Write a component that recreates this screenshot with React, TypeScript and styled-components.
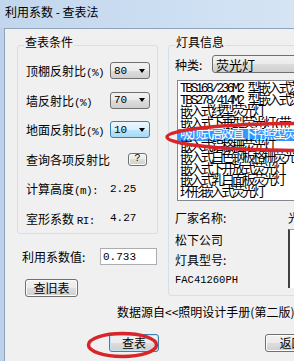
import React from 'react';
import styled, { createGlobalStyle } from 'styled-components';

const CJK = `"Noto Sans CJK SC", "Noto Sans", sans-serif`;
const MONO = `"Liberation Mono", "Noto Sans CJK SC", monospace`;

const GlobalStyle = createGlobalStyle`
  html, body {
    margin: 0;
    padding: 0;
  }
  body {
    width: 294px;
    height: 361px;
    overflow: hidden;
    background: #f0f0f0;
    font-family: ${CJK};
    font-size: 12px;
    color: #000;
  }
`;

const Window = styled.div`
  width: 340px;
  height: 361px;
  display: flex;
  flex-direction: column;
  background: #bdd2ea;
`;

const TitleBar = styled.div`
  height: 28px;
  flex: none;
  padding-left: 5px;
  line-height: 24px;
  font-size: 12px;
  background: linear-gradient(90deg, #c2d6ed 0%, #cddff2 55%, #dae7f5 100%);
`;

const Frame = styled.div`
  flex: 1;
  display: flex;
  padding-left: 4px;
`;

const Client = styled.div`
  flex: 1;
  position: relative;
  background: #f0f0f0;
  border-top: 1px solid #8fa4bb;
  border-left: 1px solid #8fa4bb;
  padding: 16px 0 0 12px;
`;

const MainRow = styled.div`
  display: flex;
  gap: 10px;
`;

const LeftColumn = styled.div`
  width: 141px;
  flex: none;
  display: flex;
  flex-direction: column;
`;

const GroupBox = styled.div<{ $height: number }>`
  position: relative;
  box-sizing: border-box;
  height: ${p => p.$height}px;
  border: 1px solid #d5dfe5;
  border-radius: 3px;
`;

const Legend = styled.span`
  position: absolute;
  top: -11px;
  left: 6px;
  padding: 0 1px;
  line-height: 14px;
  background: #f0f0f0;
`;

const ConditionList = styled.div`
  padding: 10px 0 0 8px;
`;

const Row = styled.div`
  height: 29.5px;
  display: grid;
  grid-template-columns: 84px auto;
  align-items: center;
  justify-items: start;
`;

const Latin = styled.span`
  font-family: ${MONO};
  font-size: 11px;
  letter-spacing: -0.6px;
`;

const Combo = styled.div<{ $focus?: boolean; $width?: string; $height?: number }>`
  box-sizing: border-box;
  width: ${p => p.$width || '40px'};
  height: ${p => p.$height || 17}px;
  display: flex;
  align-items: center;
  padding-left: 3px;
  border: 1px solid ${p => (p.$focus ? '#3c7fb1' : '#707070')};
  border-radius: 3px;
  background: ${p =>
    p.$focus
      ? 'linear-gradient(180deg, #eaf6fd 0%, #d9f0fc 50%, #bee6fd 50%, #a7d9f5 100%)'
      : 'linear-gradient(180deg, #f2f2f2 0%, #ebebeb 50%, #dddddd 50%, #cfcfcf 100%)'};
`;

const ComboText = styled.span`
  font-family: ${MONO};
  font-size: 11px;
`;

const Arrow = styled.span`
  margin-left: auto;
  margin-right: 4px;
  width: 0;
  height: 0;
  border-left: 3.5px solid transparent;
  border-right: 3.5px solid transparent;
  border-top: 4px solid #000;
`;

const Button = styled.button<{ $width: number; $height?: number; $default?: boolean }>`
  box-sizing: border-box;
  width: ${p => p.$width}px;
  height: ${p => p.$height || 18}px;
  padding: 0;
  margin: 0;
  font-family: ${CJK};
  font-size: 12px;
  line-height: 14px;
  color: #000;
  border: 1px solid ${p => (p.$default ? '#3c7fb1' : '#707070')};
  border-radius: 3px;
  box-shadow: inset 0 0 0 1px ${p => (p.$default ? '#c4e5f6' : '#fcfcfc')};
  background: linear-gradient(180deg, #f2f2f2 0%, #ebebeb 50%, #dddddd 50%, #cfcfcf 100%);
`;

const HelpButton = styled(Button)`
  margin-left: 18px;
  font-family: ${MONO};
  font-size: 10px;
  line-height: 10px;
`;

const ValueRow = styled.div`
  margin-top: 14px;
  padding-left: 5px;
  height: 17px;
  display: flex;
  align-items: center;
`;

const ValueLabel = styled.span`
  width: 78px;
`;

const TextBox = styled.div`
  box-sizing: border-box;
  width: 57px;
  height: 17px;
  padding-left: 2px;
  display: flex;
  align-items: center;
  background: #fff;
  border: 1px solid #abadb3;
  font-family: ${MONO};
  font-size: 11px;
`;

const OldTableButton = styled(Button)`
  margin: 14px 0 0 8px;
`;

const RightGroup = styled(GroupBox)`
  flex: 1;
  padding-left: 6px;
`;

const KindRow = styled.div`
  margin-top: 9px;
  height: 18px;
  display: flex;
  align-items: center;
`;

const KindLabel = styled.span`
  width: 37px;
  flex: none;
`;

const KindText = styled.span`
  font-size: 13px;
`;

const ListBox = styled.div`
  margin: 7px 0 0 2px;
  box-sizing: border-box;
  height: 121px;
  padding-top: 2px;
  background: #fff;
  border: 1px solid #828790;
  overflow: hidden;
`;

// rows overlap a little, as in the cramped original list
const ListItem = styled.div<{ $selected?: boolean }>`
  height: 11.5px;
  line-height: 11.5px;
  padding-left: 2px;
  white-space: nowrap;
  font-family: ${MONO};
  font-size: 13px;
  letter-spacing: -2.6px;
  background: ${p => (p.$selected ? '#3399ff' : 'transparent')};
  color: ${p => (p.$selected ? '#fff' : '#000')};
`;

const Details = styled.div`
  margin-top: 6px;
  display: flex;
`;

const DetailColumn = styled.div`
  width: 113px;
  flex: none;
`;

const Line = styled.div<{ $h: number }>`
  height: ${p => p.$h}px;
  line-height: ${p => p.$h}px;
  white-space: nowrap;
`;

const Model = styled.span`
  font-family: ${MONO};
  font-size: 10.5px;
`;

const PictureColumn = styled.div`
  display: flex;
  flex-direction: column;
`;

const PictureBox = styled.div`
  width: 60px;
  height: 58px;
  background: #fff;
  border-left: 2px solid #404040;
  border-top: 1px solid #a0a0a0;
`;

const Source = styled.div`
  margin-top: 8px;
  padding-left: 100px;
  line-height: 14px;
  white-space: nowrap;
`;

const ButtonRow = styled.div`
  margin-top: 15px;
  padding-left: 92px;
  display: flex;
  gap: 106px;
`;

const Marks = styled.svg`
  position: absolute;
  left: 0;
  top: 0;
  pointer-events: none;
`;

const conditions = [
  { label: '顶棚反射比', value: '80' },
  { label: '墙反射比', value: '70' },
  { label: '地面反射比', value: '10', focus: true },
];

const lamps = [
  'TBS168/236M2 型嵌入式荧光灯',
  'TBS278/414M2 型嵌入式荧光灯',
  '嵌入式线型荧光灯',
  '嵌入式下垂型荧光灯(带',
  '吸顶式高效直下控照型荧光灯',
  '嵌入式铝格栅荧光灯',
  '嵌入式白色钢板格栅荧光灯',
  '嵌入式下开放式荧光灯',
  '嵌入式乳白面板荧光灯',
  '环形嵌入式荧光灯',
];

export default function App() {
  return (
    <>
      <GlobalStyle />
      <Window>
        <TitleBar>利用系数 - 查表法</TitleBar>
        <Frame>
          <Client>
            <MainRow>
              <LeftColumn>
                <GroupBox $height={189}>
                  <Legend>查表条件</Legend>
                  <ConditionList>
                    {conditions.map(c => (
                      <Row key={c.label}>
                        <span>
                          {c.label}
                          <Latin>(%)</Latin>
                        </span>
                        <Combo $focus={c.focus}>
                          <ComboText>{c.value}</ComboText>
                          <Arrow />
                        </Combo>
                      </Row>
                    ))}
                    <Row>
                      <span>查询各项反射比</span>
                      <HelpButton $width={19} $height={13}>?</HelpButton>
                    </Row>
                    <Row>
                      <span>
                        计算高度<Latin>(m):</Latin>
                      </span>
                      <ComboText>2.25</ComboText>
                    </Row>
                    <Row>
                      <span>
                        室形系数 <Latin>RI:</Latin>
                      </span>
                      <ComboText>4.27</ComboText>
                    </Row>
                  </ConditionList>
                </GroupBox>
                <ValueRow>
                  <ValueLabel>利用系数值:</ValueLabel>
                  <TextBox>0.733</TextBox>
                </ValueRow>
                <OldTableButton $width={53}>查旧表</OldTableButton>
              </LeftColumn>

              <RightGroup $height={251}>
                <Legend>灯具信息</Legend>
                <KindRow>
                  <KindLabel>种类:</KindLabel>
                  <Combo $width="100%" $height={18}>
                    <KindText>荧光灯</KindText>
                  </Combo>
                </KindRow>
                <ListBox>
                  {lamps.map((name, i) => (
                    <ListItem key={i} $selected={i === 4}>
                      {name}
                    </ListItem>
                  ))}
                </ListBox>
                <Details>
                  <DetailColumn>
                    <Line $h={22}>厂家名称:</Line>
                    <Line $h={22}>松下公司</Line>
                    <Line $h={18}>灯具型号:</Line>
                    <Line $h={18}>
                      <Model>FAC41260PH</Model>
                    </Line>
                  </DetailColumn>
                  <PictureColumn>
                    <Line $h={22}>光源</Line>
                    <PictureBox />
                  </PictureColumn>
                </Details>
              </RightGroup>
            </MainRow>

            <Source>数据源自&lt;&lt;照明设计手册(第二版)&gt;&gt;</Source>

            <ButtonRow>
              <Button $width={50} $default>
                查表
              </Button>
              <Button $width={53}>返回</Button>
            </ButtonRow>

            <Marks width={335} height={332} viewBox="5 29 335 332">
              <ellipse cx={300} cy={137} rx={133} ry={13.5} fill="none" stroke="#d8242b" strokeWidth={3.5} />
              <ellipse cx={122.5} cy={345} rx={34} ry={11.5} fill="none" stroke="#d8242b" strokeWidth={3.5} />
            </Marks>
          </Client>
        </Frame>
      </Window>
    </>
  );
}
